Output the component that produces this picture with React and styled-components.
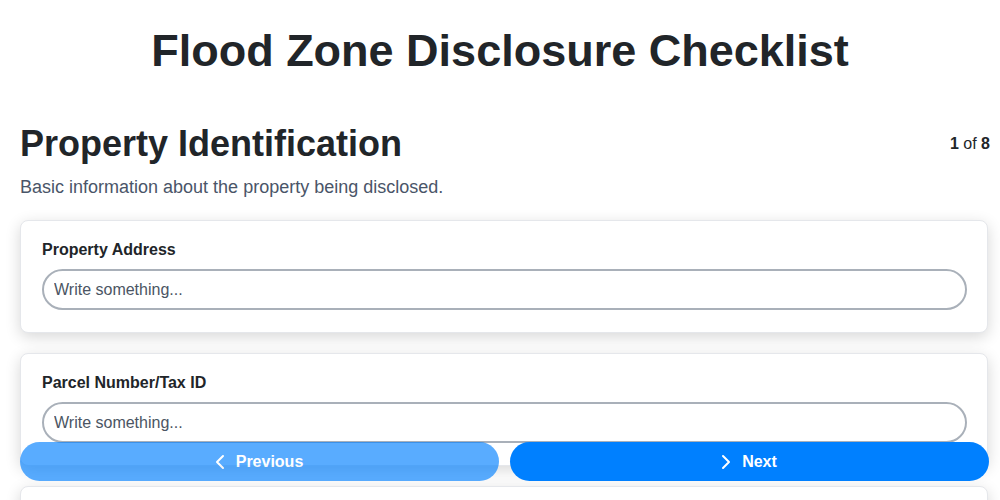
import React from 'react'
import styled, { createGlobalStyle } from 'styled-components'
import { ChevronLeft, ChevronRight } from 'lucide-react'

const GlobalStyle = createGlobalStyle`
  body {
    margin: 0;
    background: #ffffff;
    font-family: "Liberation Sans", Arial, sans-serif;
    color: #212529;
  }
`

const Page = styled.div`
  padding: 0 12px 80px 20px;
`
const Title = styled.h1`
  margin: 26px 0 46px -8px;
  text-align: center;
  font-size: 45px;
  line-height: 50px;
  font-weight: 700;
  color: #212529;
`
const SectionHead = styled.div`
  display: flex;
  justify-content: space-between;
  align-items: center;
`
const SectionTitle = styled.h2`
  margin: 0;
  font-size: 36px;
  line-height: 44px;
  font-weight: 700;
  color: #212529;
`
const Counter = styled.div`
  font-size: 16px;
  color: #212529;
  margin-right: -2px;
  b {
    font-weight: 700;
  }
`
const Description = styled.p`
  margin: 9px 0 21px;
  font-size: 18px;
  line-height: 24px;
  color: #4a5568;
`
const Cards = styled.div`
  display: flex;
  flex-direction: column;
  gap: 20px;
`
const Card = styled.div`
  background: #ffffff;
  border: 1px solid #e5e7eb;
  border-radius: 8px;
  box-shadow: 0 4px 15px rgba(0, 0, 0, 0.16);
  padding: 19px 20px 22px 21px;
`
const Label = styled.label`
  display: block;
  font-size: 16px;
  line-height: 20px;
  font-weight: 700;
  color: #212529;
  margin-bottom: 9px;
`
const Input = styled.input`
  box-sizing: border-box;
  width: 100%;
  height: 41px;
  padding: 0 10px;
  border: 2px solid #a9b0b9;
  border-radius: 21px;
  font-family: "Liberation Sans", Arial, sans-serif;
  font-size: 16px;
  color: #212529;
  background: #ffffff;
  outline: none;
  &::placeholder {
    color: #4b5563;
  }
`
const NavBar = styled.div`
  position: fixed;
  left: 20px;
  right: 11px;
  bottom: 19px;
  display: grid;
  grid-template-columns: 1fr 1fr;
  gap: 11px;
`
const NavButton = styled.button`
  display: flex;
  align-items: center;
  justify-content: center;
  gap: 4px;
  height: 39px;
  padding: 0 8px 0 0;
  border: none;
  border-radius: 20px;
  background: #0080ff;
  color: #ffffff;
  font-family: "Liberation Sans", Arial, sans-serif;
  font-size: 16px;
  font-weight: 700;
  opacity: ${p => (p.$disabled ? 0.65 : 1)};
  cursor: pointer;
`

const fields = ['Property Address', 'Parcel Number/Tax ID', 'Flood Zone Designation']

const App = () => {
  return (
    <Page>
      <GlobalStyle />
      <Title>Flood Zone Disclosure Checklist</Title>
      <SectionHead>
        <SectionTitle>Property Identification</SectionTitle>
        <Counter>
          <b>1</b> of <b>8</b>
        </Counter>
      </SectionHead>
      <Description>Basic information about the property being disclosed.</Description>
      <Cards>
        {fields.map(f => (
          <Card key={f}>
            <Label>{f}</Label>
            <Input placeholder="Write something..." />
          </Card>
        ))}
      </Cards>
      <NavBar>
        <NavButton $disabled>
          <ChevronLeft size={24} strokeWidth={2} />
          Previous
        </NavButton>
        <NavButton>
          <ChevronRight size={24} strokeWidth={2} />
          Next
        </NavButton>
      </NavBar>
    </Page>
  )
}

export default App
